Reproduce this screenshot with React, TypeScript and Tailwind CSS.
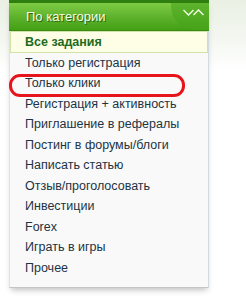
const items = [
  "Только регистрация",
  "Только клики",
  "Регистрация + активность",
  "Приглашение в рефералы",
  "Постинг в форумы/блоги",
  "Написать статью",
  "Отзыв/проголосовать",
  "Инвестиции",
  "Forex",
  "Играть в игры",
  "Прочее",
]

export default function App() {
  return (
    <div
      className="w-[246px] h-[299px] overflow-hidden bg-[linear-gradient(180deg,#e9f0e3_0px,#f4f7f1_40px,#ffffff_70px)] pl-[9px]"
      style={{ fontFamily: "'Liberation Sans', Arial, sans-serif" }}
    >
      <div className="w-[200px] shadow-[0_4px_6px_-2px_rgba(0,0,0,0.25)]">
        {/* шапка */}
        <div className="relative h-[31px] border-t-[3px] border-[#2f7f10] border-b border-b-[#3a8a14] bg-[linear-gradient(180deg,#7fcb45,#5cb12a_55%,#43a015)] flex items-center pl-[17px]">
          <span className="relative z-10 text-[13px] text-[#f4fbe9] [text-shadow:1px_1px_0_#2b6b0c]">По категории</span>
          <div className="absolute right-0 top-0 h-full w-[38px] rounded-bl-[24px] bg-[#4aa51c]/60" />
          <svg className="absolute right-[5px] top-[6px]" width="21" height="7" viewBox="0 0 21 7">
            <path d="M0.5 1 L5.5 6 L10.5 1" fill="none" stroke="#eaf8da" strokeWidth="1.5" />
            <path d="M10.5 6 L15.5 1 L20.5 6" fill="none" stroke="#eaf8da" strokeWidth="1.5" />
          </svg>
        </div>
        <div className="bg-[#f9f9f9] border-r border-r-[#d3dbe2] border-b border-b-[#c4c4c4] border-l border-l-[#dde3e8] pb-[8px]">
          <div className="h-[22px] bg-[#fefee6] border border-[#cde3a8] flex items-center pl-[14px]">
            <span className="text-[12.5px] font-bold text-[#1d6b1d]">Все задания</span>
          </div>
          {items.map((t, i) => (
            <div key={t} className="relative h-[20.5px] flex items-center pl-[15px]">
              {i === 1 && (
                <div className="absolute left-[-1px] top-[0px] w-[176px] h-[23px] border-[3px] border-[#e8141c] rounded-[11px]" />
              )}
              <span className="text-[12.5px] text-[#1c3344]">{t}</span>
            </div>
          ))}
        </div>
      </div>
    </div>
  )
}
